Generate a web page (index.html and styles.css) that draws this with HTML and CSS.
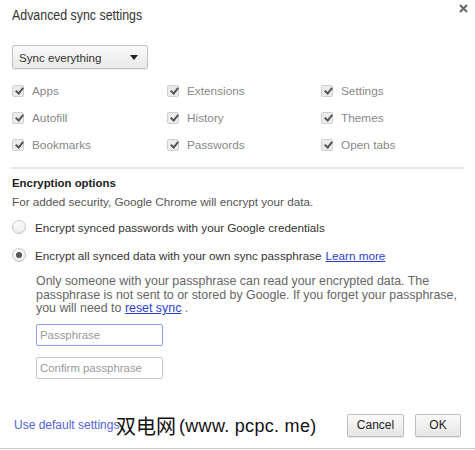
FILE: index.html
```html
<!DOCTYPE html>
<html>
<head>
<meta charset="utf-8">
<link rel="stylesheet" href="styles.css">
</head>
<body>
<div class="dialog">
  <div class="header">
    <h1 class="title">Advanced sync settings</h1>
    <svg class="close" width="9" height="9" viewBox="0 0 9 9"><path d="M1 1L8 8M8 1L1 8" stroke="#666" stroke-width="2"/></svg>
  </div>
  <div class="select"><span>Sync everything</span><span class="arrow"></span></div>
  <div class="grid">
    <label class="cb"><span class="box"></span>Apps</label>
    <label class="cb"><span class="box"></span>Extensions</label>
    <label class="cb"><span class="box"></span>Settings</label>
    <label class="cb"><span class="box"></span>Autofill</label>
    <label class="cb"><span class="box"></span>History</label>
    <label class="cb"><span class="box"></span>Themes</label>
    <label class="cb"><span class="box"></span>Bookmarks</label>
    <label class="cb"><span class="box"></span>Passwords</label>
    <label class="cb"><span class="box"></span>Open tabs</label>
  </div>
  <hr class="sep">
  <div class="enc-title">Encryption options</div>
  <div class="enc-desc">For added security, Google Chrome will encrypt your data.</div>
  <div class="radios">
    <div class="radio"><span class="dot"></span>Encrypt synced passwords with your Google credentials</div>
    <div class="radio"><span class="dot on"></span>Encrypt all synced data with your own sync passphrase <a class="link learn">Learn more</a></div>
  </div>
  <p class="note"><span>Only someone with your passphrase can read your encrypted data. The passphrase is not sent to or stored by Google. If you forget your passphrase, you will need to</span> <a class="link">reset sync</a> <span>.</span></p>
  <div class="input focus">Passphrase</div>
  <div class="input">Confirm passphrase</div>
  <div class="footer">
    <a class="default">Use default settings</a>
    <div class="buttons">
      <span class="btn cancel">Cancel</span>
      <span class="btn ok">OK</span>
    </div>
  </div>
  <div class="watermark"><span class="cjk">双电网</span><span class="lat">(www. pcpc. me)</span></div>
</div>
</body>
</html>
```
FILE: styles.css
```css
html, body { margin: 0; padding: 0; background: #fff; }
body { font-family: "Liberation Sans", Arial, sans-serif; font-size: 12px; color: #333; }
.dialog { position: relative; width: 475px; height: 449px; border-bottom: 1px solid #c8c8c8; box-sizing: border-box; padding: 0 11px 0 12px; }
.header { display: flex; justify-content: space-between; align-items: flex-start; height: 45px; }
.title { margin: 8px 0 0 0; font-size: 12.4px; font-weight: normal; color: #333; line-height: 16px; transform: scaleY(1.12); transform-origin: left center; }
.close { margin-top: 4px; margin-right: -4px; }
.select { width: 136px; height: 24px; box-sizing: border-box; border: 1px solid #c3c3c3; border-radius: 2px; background: linear-gradient(#fafafa, #e9e9e9); display: flex; align-items: center; justify-content: space-between; padding: 0 9px 0 6px; font-size: 11.6px; color: #333; box-shadow: 0 1px 1px rgba(0,0,0,0.08); }
.arrow { width: 0; height: 0; border-left: 4px solid transparent; border-right: 4px solid transparent; border-top: 5px solid #222; }
.grid { display: grid; grid-template-columns: 155px 154px 1fr; margin-top: 8px; }
.cb { display: flex; align-items: center; height: 27px; color: #888; font-size: 11.8px; }
.box { width: 12px; height: 12px; border: 1px solid #cfcfcf; border-radius: 2px; background: #ececec; margin-right: 8px; position: relative; box-sizing: border-box; }
.box::after { content: ""; position: absolute; left: 3.5px; top: 0.5px; width: 3px; height: 6px; border: solid #555; border-width: 0 2px 2px 0; transform: rotate(40deg); }
.sep { border: 0; border-top: 2px solid #e8e8e8; margin: 9px 0 0 -1px; width: 453px; }
.enc-title { font-weight: bold; font-size: 11.4px; color: #222; margin-top: 7px; line-height: 15px; }
.enc-desc { font-size: 11.7px; color: #555; line-height: 15px; margin-top: 3px; }
.radios { margin-top: 4px; }
.radio { display: flex; align-items: center; height: 28px; font-size: 11.7px; color: #333; }
.dot { width: 14px; height: 14px; border: 1px solid #c4c4c4; border-radius: 50%; background: linear-gradient(#fdfdfd, #ececec); box-sizing: border-box; margin-right: 9px; position: relative; }
.dot.on::after { content: ""; position: absolute; left: 3px; top: 3px; width: 6px; height: 6px; border-radius: 50%; background: #555; }
.link { color: #2a3fd0; text-decoration: underline; }
.learn { margin-left: 4px; }
.note { margin: 6px 0 0 24px; font-size: 12.4px; line-height: 13.5px; color: #666; width: 430px; }
.input { margin: 11px 0 0 24px; width: 127px; height: 22px; box-sizing: border-box; border: 1px solid #c6c6c6; border-radius: 2px; font-size: 11.4px; color: #999; padding: 4px 0 0 3px; }
.input.focus { border-color: #8aa2ee; margin-top: 8px; }
.footer { display: flex; justify-content: space-between; align-items: center; margin-top: 35px; }
.default { color: #5462d6; font-size: 12px; margin-left: 2px; }
.buttons { display: flex; gap: 11px; margin-right: 3px; }
.btn { height: 23px; box-sizing: border-box; border: 1px solid #bdbdbd; border-radius: 2px; background: linear-gradient(#fafafa, #e6e6e6); font-size: 12px; color: #222; display: flex; align-items: center; justify-content: center; box-shadow: 0 1px 1px rgba(0,0,0,0.1); }
.cancel { width: 57px; }
.ok { width: 46px; }
.watermark { position: absolute; left: 116px; top: 413px; display: flex; align-items: center; color: #111; line-height: 26px; }
.cjk { font-family: "Noto Sans CJK SC", sans-serif; font-size: 20px; }
.lat { font-family: "Liberation Sans", sans-serif; font-size: 18px; margin-left: 3px; letter-spacing: 0.3px; }
```
